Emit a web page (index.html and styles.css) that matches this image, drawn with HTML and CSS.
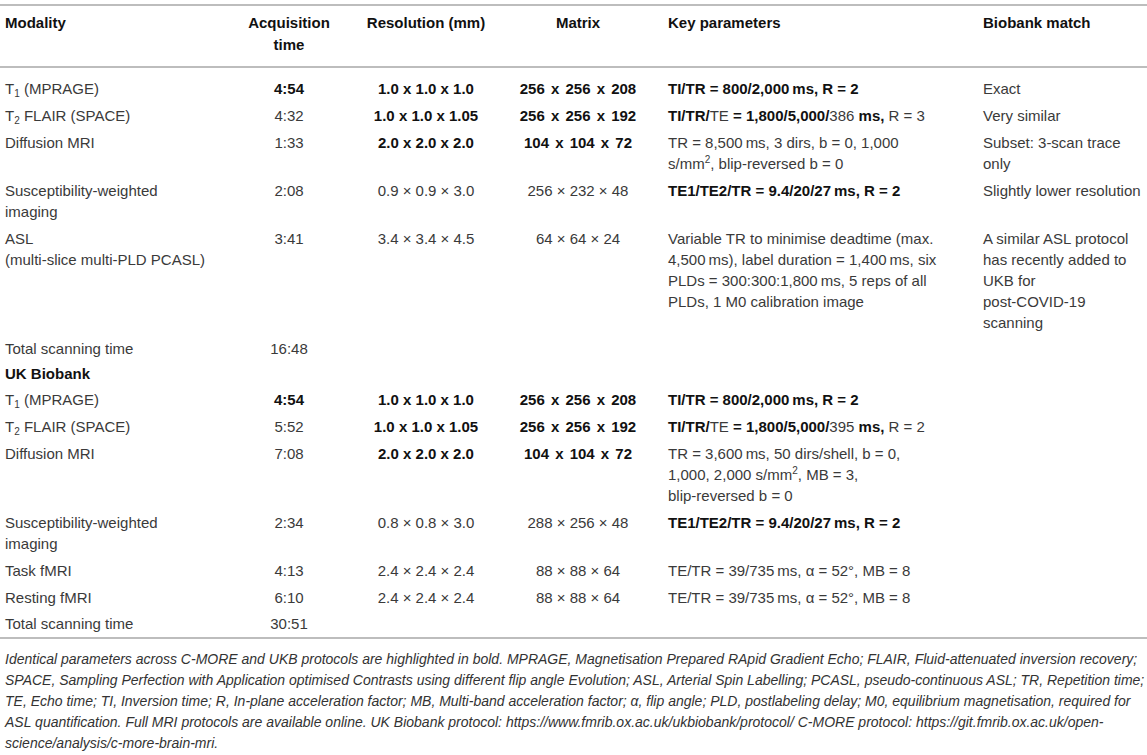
FILE: index.html
```html
<!DOCTYPE html>
<html lang="en">
<head>
<meta charset="utf-8">
<title>MRI protocol comparison</title>
<link rel="stylesheet" href="styles.css">
</head>
<body>
<div class="page">
<table class="proto">
  <colgroup>
    <col class="c1"><col class="c2"><col class="c3"><col class="c4"><col class="c5"><col class="c6">
  </colgroup>
  <thead>
    <tr>
      <th class="left">Modality</th>
      <th class="center">Acquisition<br>time</th>
      <th class="center">Resolution (mm)</th>
      <th class="center">Matrix</th>
      <th class="left kp">Key parameters</th>
      <th class="left">Biobank match</th>
    </tr>
  </thead>
  <tbody>
    <tr class="first">
      <td>T<sub>1</sub> (MPRAGE)</td>
      <td class="center"><b>4:54</b></td>
      <td class="center"><b>1.0 x 1.0 x 1.0</b></td>
      <td class="center mx"><b>256 x 256 x 208</b></td>
      <td class="kp"><b>TI/TR = 800/2,000&thinsp;ms, R = 2</b></td>
      <td>Exact</td>
    </tr>
    <tr>
      <td>T<sub>2</sub> FLAIR (SPACE)</td>
      <td class="center">4:32</td>
      <td class="center"><b>1.0 x 1.0 x 1.05</b></td>
      <td class="center mx"><b>256 x 256 x 192</b></td>
      <td class="kp"><b>TI/TR/</b>TE <b>= 1,800/5,000/</b>386 <b>ms,</b> R = 3</td>
      <td>Very similar</td>
    </tr>
    <tr>
      <td>Diffusion MRI</td>
      <td class="center">1:33</td>
      <td class="center"><b>2.0 x 2.0 x 2.0</b></td>
      <td class="center mx"><b>104 x 104 x 72</b></td>
      <td class="kp">TR = 8,500&thinsp;ms, 3 dirs, b = 0, 1,000<br>s/mm<sup>2</sup>, blip-reversed b = 0</td>
      <td>Subset: 3-scan trace<br>only</td>
    </tr>
    <tr>
      <td>Susceptibility-weighted<br>imaging</td>
      <td class="center">2:08</td>
      <td class="center">0.9 × 0.9 × 3.0</td>
      <td class="center">256 × 232 × 48</td>
      <td class="kp"><b>TE1/TE2/TR = 9.4/20/27&thinsp;ms, R = 2</b></td>
      <td>Slightly lower resolution</td>
    </tr>
    <tr>
      <td>ASL<br>(multi-slice multi-PLD PCASL)</td>
      <td class="center">3:41</td>
      <td class="center">3.4 × 3.4 × 4.5</td>
      <td class="center">64 × 64 × 24</td>
      <td class="kp">Variable TR to minimise deadtime (max.<br>4,500&thinsp;ms), label duration = 1,400&thinsp;ms, six<br>PLDs = 300:300:1,800&thinsp;ms, 5 reps of all<br>PLDs, 1 M0 calibration image</td>
      <td>A similar ASL protocol<br>has recently added to<br>UKB for<br>post-COVID-19<br>scanning</td>
    </tr>
    <tr class="tight">
      <td>Total scanning time</td>
      <td class="center">16:48</td>
      <td></td><td></td><td class="kp"></td><td></td>
    </tr>
    <tr class="tight">
      <td><b>UK Biobank</b></td>
      <td></td><td></td><td></td><td class="kp"></td><td></td>
    </tr>
    <tr>
      <td>T<sub>1</sub> (MPRAGE)</td>
      <td class="center"><b>4:54</b></td>
      <td class="center"><b>1.0 x 1.0 x 1.0</b></td>
      <td class="center mx"><b>256 x 256 x 208</b></td>
      <td class="kp"><b>TI/TR = 800/2,000&thinsp;ms, R = 2</b></td>
      <td></td>
    </tr>
    <tr>
      <td>T<sub>2</sub> FLAIR (SPACE)</td>
      <td class="center">5:52</td>
      <td class="center"><b>1.0 x 1.0 x 1.05</b></td>
      <td class="center mx"><b>256 x 256 x 192</b></td>
      <td class="kp"><b>TI/TR/</b>TE <b>= 1,800/5,000/</b>395 <b>ms,</b> R = 2</td>
      <td></td>
    </tr>
    <tr>
      <td>Diffusion MRI</td>
      <td class="center">7:08</td>
      <td class="center"><b>2.0 x 2.0 x 2.0</b></td>
      <td class="center mx"><b>104 x 104 x 72</b></td>
      <td class="kp">TR = 3,600&thinsp;ms, 50 dirs/shell, b = 0,<br>1,000, 2,000 s/mm<sup>2</sup>, MB = 3,<br>blip-reversed b = 0</td>
      <td></td>
    </tr>
    <tr>
      <td>Susceptibility-weighted<br>imaging</td>
      <td class="center">2:34</td>
      <td class="center">0.8 × 0.8 × 3.0</td>
      <td class="center">288 × 256 × 48</td>
      <td class="kp"><b>TE1/TE2/TR = 9.4/20/27&thinsp;ms, R = 2</b></td>
      <td></td>
    </tr>
    <tr>
      <td>Task fMRI</td>
      <td class="center">4:13</td>
      <td class="center">2.4 × 2.4 × 2.4</td>
      <td class="center">88 × 88 × 64</td>
      <td class="kp">TE/TR = 39/735&thinsp;ms, α = 52°, MB = 8</td>
      <td></td>
    </tr>
    <tr>
      <td>Resting fMRI</td>
      <td class="center">6:10</td>
      <td class="center">2.4 × 2.4 × 2.4</td>
      <td class="center">88 × 88 × 64</td>
      <td class="kp">TE/TR = 39/735&thinsp;ms, α = 52°, MB = 8</td>
      <td></td>
    </tr>
    <tr class="tight last">
      <td>Total scanning time</td>
      <td class="center">30:51</td>
      <td></td><td></td><td class="kp"></td><td></td>
    </tr>
  </tbody>
</table>
<p class="note">Identical parameters across C-MORE and UKB protocols are highlighted in bold. MPRAGE, Magnetisation Prepared RApid Gradient Echo; FLAIR, Fluid-attenuated inversion recovery;<br>SPACE, Sampling Perfection with Application optimised Contrasts using different flip angle Evolution; ASL, Arterial Spin Labelling; PCASL, pseudo-continuous ASL; TR, Repetition time;<br>TE, Echo time; TI, Inversion time; R, In-plane acceleration factor; MB, Multi-band acceleration factor; α, flip angle; PLD, postlabeling delay; M0, equilibrium magnetisation, required for<br>ASL quantification. Full MRI protocols are available online. UK Biobank protocol: https://www.fmrib.ox.ac.uk/ukbiobank/protocol/ C-MORE protocol: https://git.fmrib.ox.ac.uk/open-<br>science/analysis/c-more-brain-mri.</p>
</div>
</body>
</html>
```
FILE: styles.css
```css
html, body {
  margin: 0;
  padding: 0;
  background: #ffffff;
}

.page {
  width: 1147px;
  padding-top: 4px;
  font-family: "Liberation Sans", Arial, sans-serif;
  color: #3a3a3a;
}

.proto {
  width: 1147px;
  border-collapse: collapse;
  table-layout: fixed;
  font-size: 15px;
  line-height: 21px;
  border-top: 2px solid #bdbdbd;
  border-bottom: 2px solid #bdbdbd;
}

.c1 { width: 240px; }
.c2 { width: 98px; }
.c3 { width: 176px; }
.c4 { width: 128px; }
.c5 { width: 336px; }
.c6 { width: 169px; }

.proto th {
  font-weight: bold;
  color: #111111;
  line-height: 22px;
  padding: 6px 5px 10px;
  vertical-align: top;
  border-bottom: 2px solid #bdbdbd;
}

.proto td {
  padding: 3px 5px;
  vertical-align: top;
  white-space: nowrap;
}

.proto tr.first td { padding-top: 10px; }
.proto tr.tight td { padding-top: 2px; padding-bottom: 2px; }
.proto tr.last td { padding-bottom: 3px; }

.proto b {
  color: #111111;
}

.proto .mx b { word-spacing: 2px; }

.left { text-align: left; }
.center { text-align: center; }
.proto td.center, .proto th.center { text-align: center; }
.proto .kp { padding-left: 26px; }

.proto sub {
  font-size: 10px;
  line-height: 0;
  vertical-align: -3px;
}

.proto sup {
  font-size: 10px;
  line-height: 0;
  vertical-align: 6px;
}

.note {
  margin: 0;
  padding: 10px 5px 0;
  font-size: 14px;
  line-height: 21px;
  font-style: italic;
  color: #333333;
  white-space: nowrap;
}
```
